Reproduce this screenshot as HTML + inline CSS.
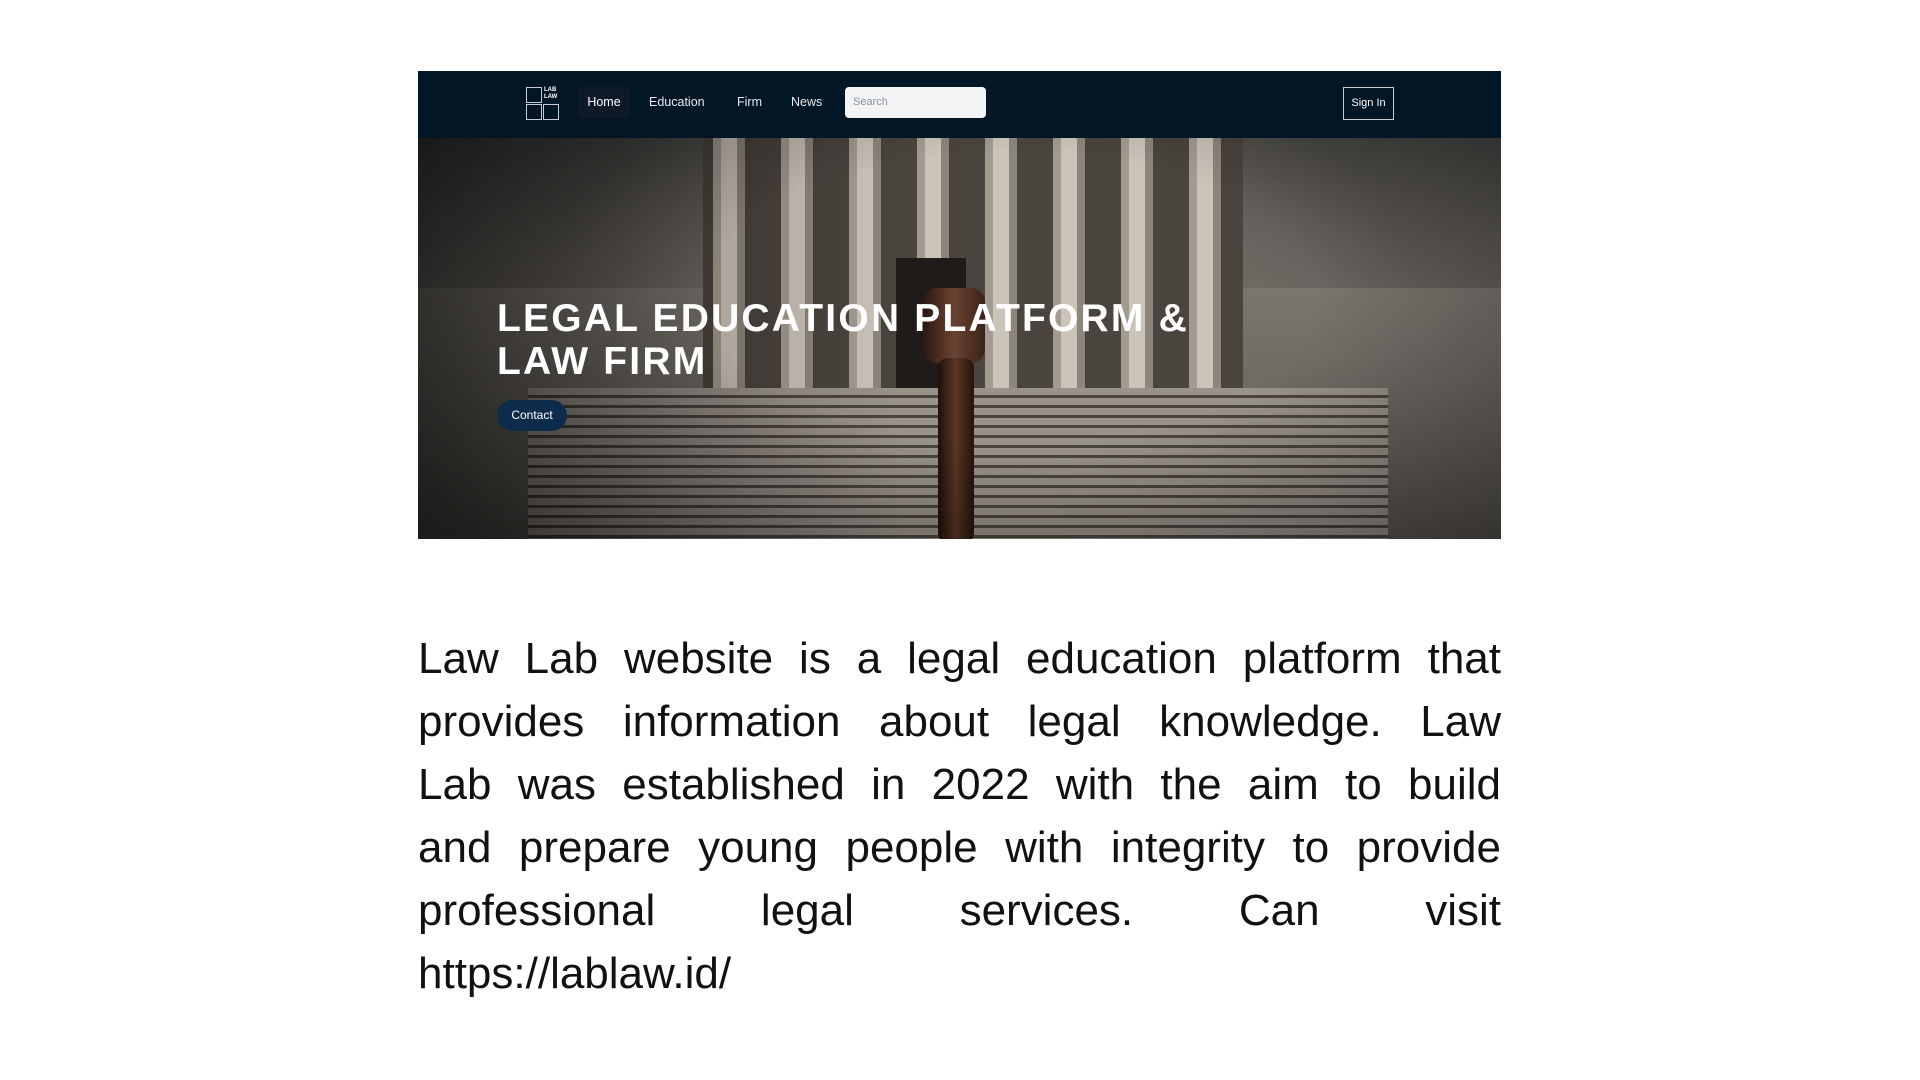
<!DOCTYPE html>
<html><head><meta charset="utf-8"><style>
*{margin:0;padding:0;box-sizing:border-box}
body{width:1920px;height:1080px;background:#fff;position:relative;overflow:hidden;font-family:"Liberation Sans",sans-serif}
.shot{position:absolute;left:418px;top:71px;width:1083px;height:468px;overflow:hidden;background:#3a3835}
.nav{position:absolute;left:0;top:0;width:100%;height:67px;background:#031626;z-index:5}
.hero{position:absolute;left:0;top:67px;width:100%;height:401px;
background:
radial-gradient(ellipse 55% 75% at 52% 30%,rgba(150,142,132,.55),rgba(0,0,0,0) 70%),
linear-gradient(180deg,#4a4845 0%,#6b6660 45%,#5e5852 70%,#4a4540 100%)}
.cols{position:absolute;left:285px;top:0;width:540px;height:290px;
background:repeating-linear-gradient(90deg,#4a443e 0 10px,#a39b90 10px 18px,#cbc4b9 18px 34px,#8d867c 34px 42px,#4a443e 42px 68px)}
.door{position:absolute;left:478px;top:120px;width:70px;height:170px;background:#1e1b18}
.steps{position:absolute;left:110px;top:250px;width:860px;height:151px;
background:repeating-linear-gradient(180deg,#9a938a 0 7px,#4a4540 7px 10px)}
.wingL{position:absolute;left:0;top:150px;width:290px;height:251px;background:linear-gradient(180deg,#7a756e,#5e5a54)}
.wingR{position:absolute;right:0;top:150px;width:290px;height:251px;background:linear-gradient(180deg,#7a756e,#5e5a54)}
.shade{position:absolute;inset:0;background:radial-gradient(ellipse 70% 90% at 55% 40%,rgba(0,0,0,0) 40%,rgba(0,0,0,.5) 100%),linear-gradient(90deg,rgba(0,0,0,.4),rgba(0,0,0,0) 45%)}
.gavel{position:absolute;left:505px;top:150px;width:62px;height:75px;background:linear-gradient(90deg,#2a1710,#6a4433,#3a2218);border-radius:14px}
.handle{position:absolute;left:520px;top:220px;width:36px;height:185px;background:linear-gradient(90deg,#1e100a,#5a3626,#24130c);border-radius:10px}
h1{position:absolute;left:79px;top:226px;color:#fff;font-size:39px;line-height:43px;font-weight:700;letter-spacing:2.2px;z-index:3}
.contact{position:absolute;left:79px;top:329px;width:70px;height:31px;border-radius:16px;background:#0d2c4c;color:#fff;font-size:12px;line-height:31px;text-align:center;z-index:3}
.logo{position:absolute;left:108px;top:16px;width:34px;height:33px}
.logo i{position:absolute;width:16px;height:16px;border:1.5px solid #c8ccd2}
.logo b{position:absolute;left:18px;top:0;color:#fff;font-size:6px;line-height:7px;font-weight:700}
.nl{position:absolute;top:16px;height:31px;line-height:31px;color:#e6e9ee;font-size:12.5px}
.home{left:160px;width:52px;background:#0e1a28;border-radius:5px;text-align:center;color:#fff}
.search{position:absolute;left:427px;top:16px;width:141px;height:31px;background:#f3f4f6;border-radius:4px;color:#8a9099;font-size:11px;line-height:31px;padding-left:8px}
.sign{position:absolute;left:925px;top:16px;width:51px;height:33px;border:1.5px solid #c9ccd0;color:#fff;font-size:11px;line-height:30px;text-align:center}
.p{position:absolute;left:418px;top:627px;width:1083px;font-family:"Liberation Sans",sans-serif;font-size:44px;line-height:63px;color:#111}
.p div{text-align:justify;text-align-last:justify;white-space:nowrap}
.p div.l{text-align-last:left}
</style></head><body>
<div class="shot">
 <div class="nav">
  <div class="logo"><i style="left:0;top:0"></i><i style="left:0;top:17px"></i><i style="left:17px;top:17px"></i><b>LAB<br>LAW</b></div>
  <div class="nl home">Home</div>
  <div class="nl" style="left:231px">Education</div>
  <div class="nl" style="left:319px">Firm</div>
  <div class="nl" style="left:373px">News</div>
  <div class="search">Search</div>
  <div class="sign">Sign In</div>
 </div>
 <div class="hero">
  <div class="wingL"></div><div class="wingR"></div>
  <div class="cols"></div><div class="door"></div>
  <div class="steps"></div>
  <div class="gavel"></div><div class="handle"></div>
  <div class="shade"></div>
 </div>
 <h1>LEGAL EDUCATION PLATFORM &amp;<br>LAW FIRM</h1>
 <div class="contact">Contact</div>
</div>
<div class="p">
<div style="white-space:normal">Law Lab website is a legal education platform that</div>
<div style="white-space:normal">provides information about legal knowledge. Law</div>
<div style="white-space:normal">Lab was established in 2022 with the aim to build</div>
<div style="white-space:normal">and prepare young people with integrity to provide</div>
<div style="white-space:normal">professional legal services. Can visit</div>
<div class="l">https://lablaw.id/</div>
</div>
</body></html>
